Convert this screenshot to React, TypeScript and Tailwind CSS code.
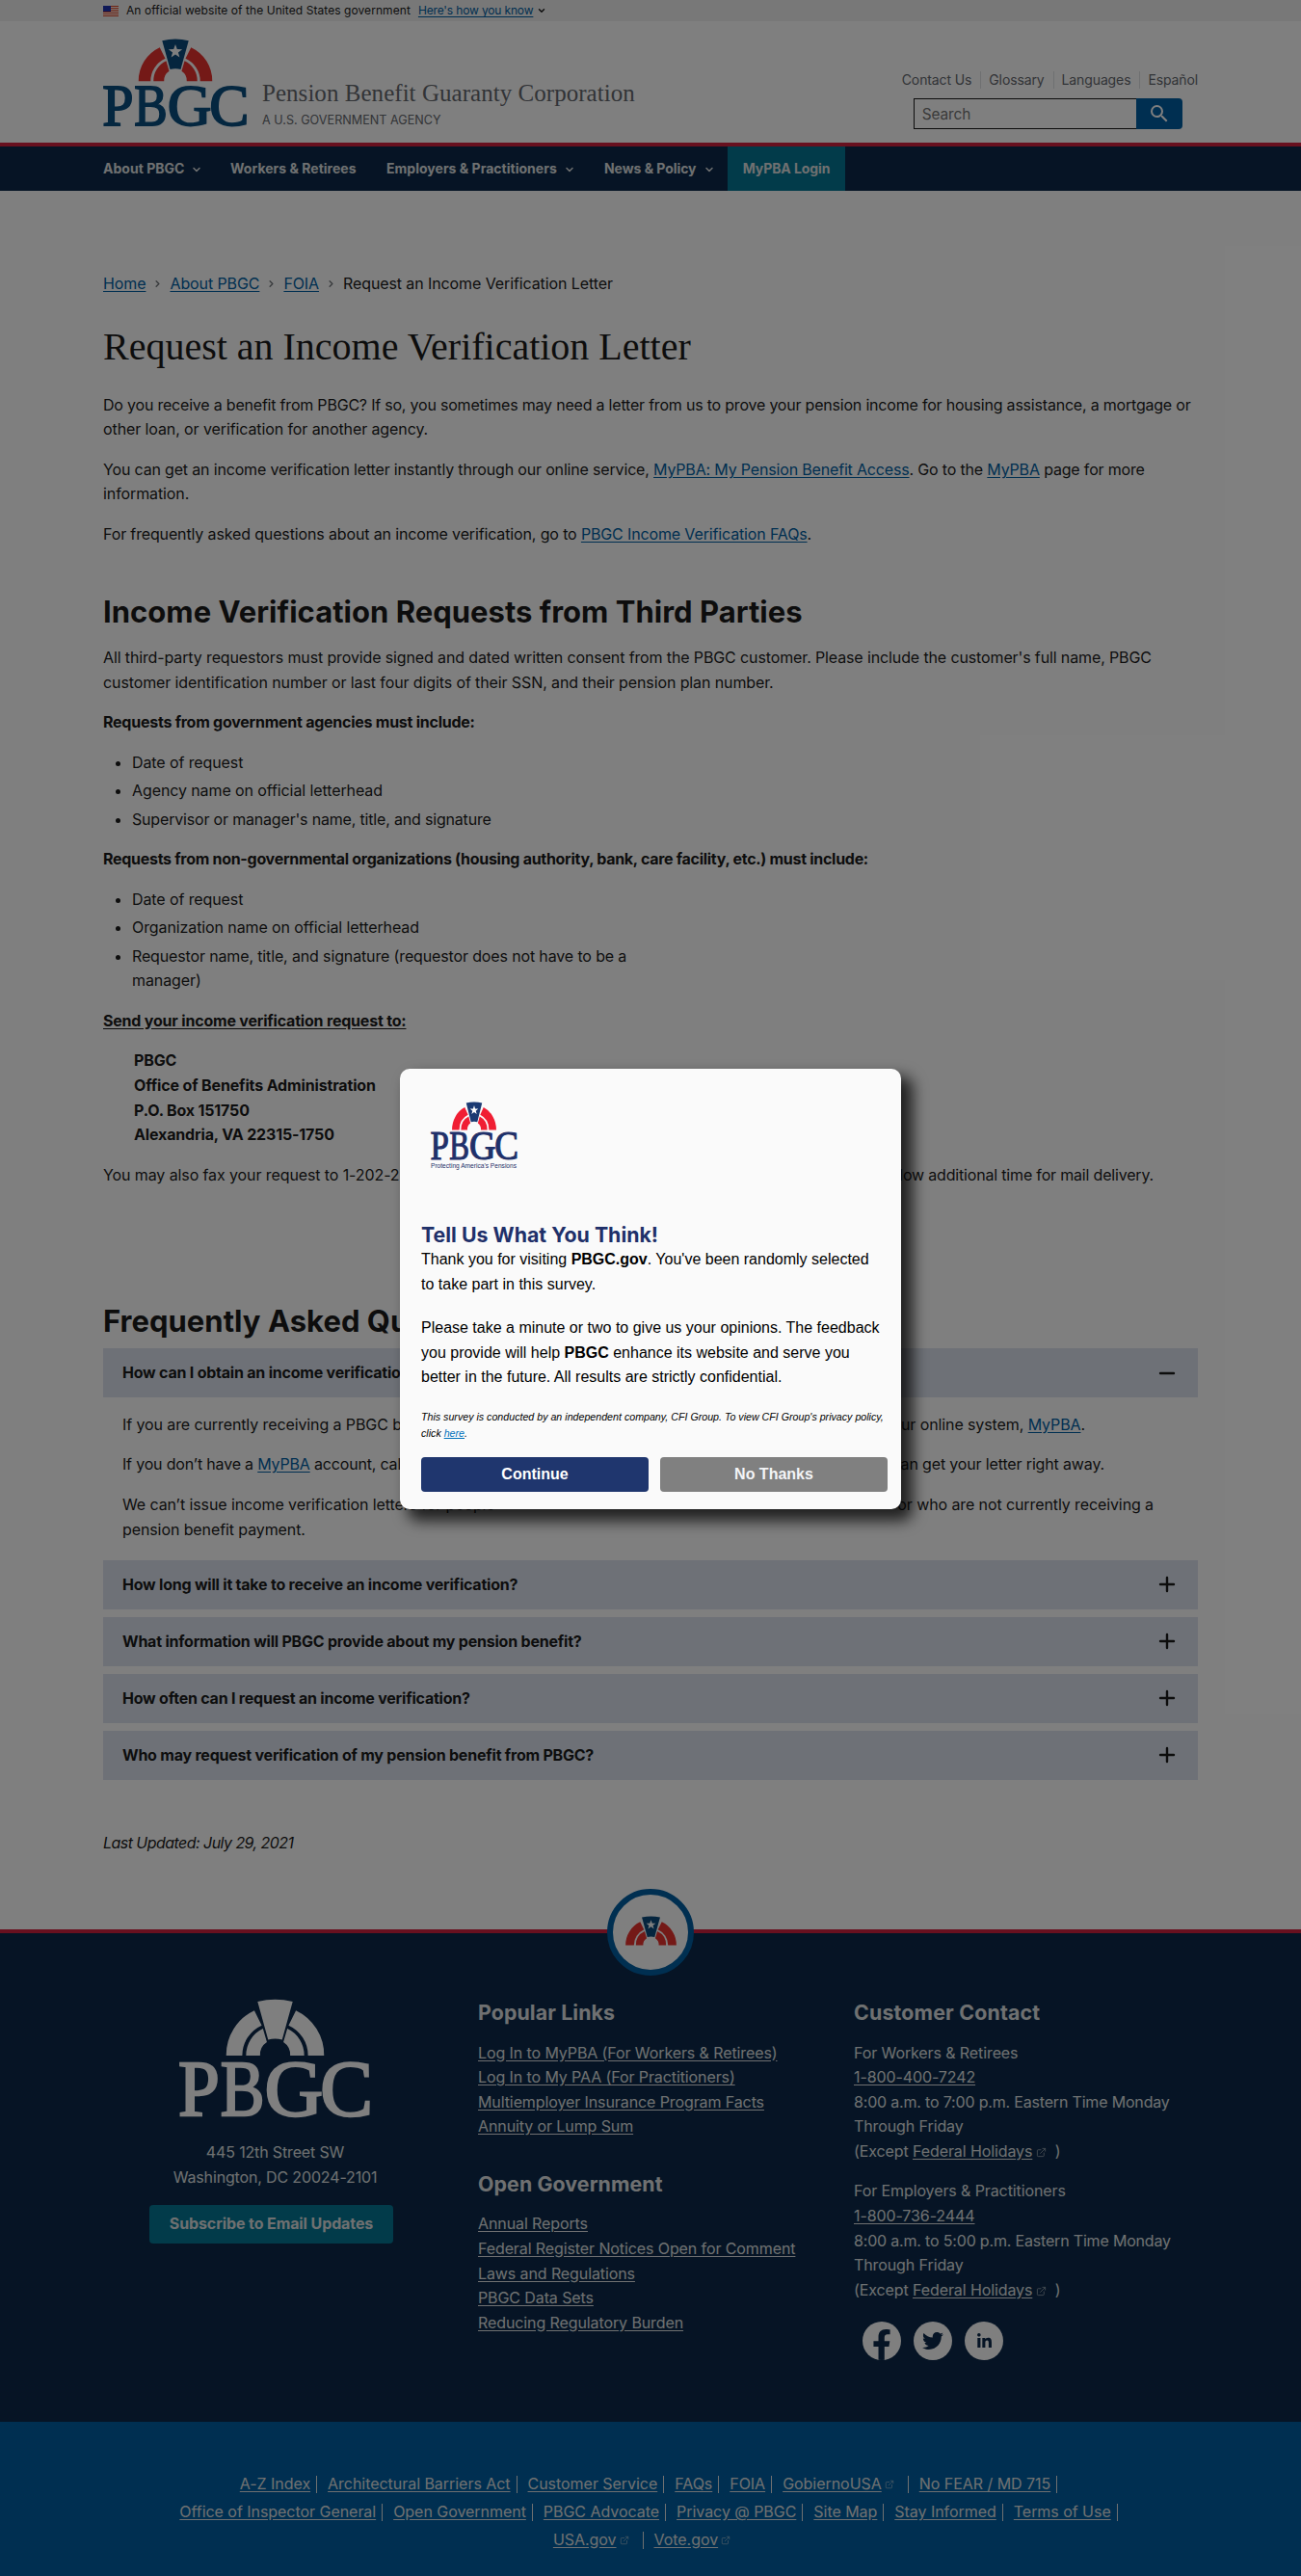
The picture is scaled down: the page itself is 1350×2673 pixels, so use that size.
import React from 'react'
import { ChevronDown, ChevronRight, ExternalLink, Minus, Plus } from 'lucide-react'
import { MdSearch } from 'react-icons/md'
import { FaFacebookF, FaTwitter, FaLinkedinIn } from 'react-icons/fa'

const link = 'text-[#005ea2] underline underline-offset-2'

function Arch({ ring, stone, star }: { ring: string; stone: string; star?: boolean }) {
  return (
    <g>
      <g fill={ring}>
        <path d="M-51 0A51 51 0 0 1-21.7-46.8L-14-31.3A34.3 34.3 0 0 0-34.3 0Z" />
        <path d="M51 0A51 51 0 0 0 21.7-46.8L14-31.3A34.3 34.3 0 0 1 34.3 0Z" />
        <path d="M-30.3 0A30.3 30.3 0 0 1-12.7-28L-8.6-14A15.7 15.7 0 0 0-15.7 0Z" />
        <path d="M30.3 0A30.3 30.3 0 0 0 12.7-28L8.6-14A15.7 15.7 0 0 1 15.7 0Z" />
      </g>
      <path fill={stone} d="M-18.3-56Q0-60.5 18.3-56L7.3-16.5Q0-18.5-7.3-16.5Z" />
      {star && (
        <path
          fill="#fff"
          d="M0-51L2.4-44.2 9.5-44 3.9-39.7 5.9-32.9 0-37 -5.9-32.9 -3.9-39.7 -9.5-44 -2.4-44.2Z"
        />
      )}
    </g>
  )
}

const letters = [
  { c: 'P', x: -101, w: 43 },
  { c: 'B', x: -57, w: 46 },
  { c: 'G', x: -11, w: 61 },
  { c: 'C', x: 47, w: 55 },
]

function Logo({
  className,
  ring,
  stone,
  text,
  star,
}: {
  className: string
  ring: string
  stone: string
  text: string
  star?: boolean
}) {
  return (
    <svg viewBox="-100 -59 200 124" preserveAspectRatio="none" className={`overflow-visible ${className}`}>
      <Arch ring={ring} stone={stone} star={star} />
      {letters.map((l) => (
        <text
          key={l.c}
          x={l.x}
          y={61.5}
          textLength={l.w}
          lengthAdjust="spacingAndGlyphs"
          letterSpacing={0}
          fontSize={83}
          fontFamily="Liberation Serif, serif"
          fill={text}
          stroke={text}
          strokeWidth={2.4}
        >
          {l.c}
        </text>
      ))}
    </svg>
  )
}

function Flag() {
  return (
    <svg viewBox="0 0 16 11" className="h-[11px] w-4">
      <rect width="16" height="11" fill="#fff" />
      {[0, 2, 4, 6, 8, 10].map((y) => (
        <rect key={y} y={y} width="16" height="1" fill="#db3e1f" />
      ))}
      <rect width="8" height="6" fill="#1e33b1" />
    </svg>
  )
}

function Ext() {
  return <ExternalLink className="ml-1 inline size-[11px] opacity-60" strokeWidth={2} />
}

function NavItem({ label, menu, className }: { label: string; menu?: boolean; className: string }) {
  return (
    <div className={`flex items-center whitespace-nowrap ${className}`}>
      {label}
      {menu && <ChevronDown className="ml-[7px] mt-0.5 size-3" strokeWidth={3} />}
    </div>
  )
}

function Bar({ label, open }: { label: string; open?: boolean }) {
  return (
    <div className="flex h-[50.5px] items-center justify-between bg-[#dce3ef] pl-5 pr-5 font-bold tracking-[-0.22px]">
      <span>{label}</span>
      {open ? <Minus className="size-6" strokeWidth={2.4} /> : <Plus className="size-6" strokeWidth={2.4} />}
    </div>
  )
}

function FooterLinks({ items }: { items: string[] }) {
  return (
    <ul>
      {items.map((t) => (
        <li key={t} className="whitespace-nowrap">
          <a className="underline underline-offset-2">{t}</a>
        </li>
      ))}
    </ul>
  )
}

function Contact({ title, phone, hours }: { title: string; phone: string; hours: string }) {
  return (
    <p className="mb-4">
      {title}
      <br />
      <a className="underline underline-offset-2">{phone}</a>
      <br />
      <span className="tracking-[-0.18px]">{hours}</span>
      <br />
      Through Friday
      <br />
      (Except <a className="underline underline-offset-2">Federal Holidays</a>
      <Ext /> <span className="ml-1">)</span>
    </p>
  )
}

const legal: { t: string; ext?: boolean; last?: boolean }[][] = [
  [
    { t: 'A-Z Index' },
    { t: 'Architectural Barriers Act' },
    { t: 'Customer Service' },
    { t: 'FAQs' },
    { t: 'FOIA' },
    { t: 'GobiernoUSA', ext: true },
    { t: 'No FEAR / MD 715' },
  ],
  [
    { t: 'Office of Inspector General' },
    { t: 'Open Government' },
    { t: 'PBGC Advocate' },
    { t: 'Privacy @ PBGC' },
    { t: 'Site Map' },
    { t: 'Stay Informed' },
    { t: 'Terms of Use' },
  ],
  [
    { t: 'USA.gov', ext: true },
    { t: 'Vote.gov', ext: true, last: true },
  ],
]

function Survey() {
  return (
    <div className="absolute left-[415px] top-[1109px] flex h-[457px] w-[520px] flex-col rounded-[10px] bg-[#fafafa] pl-[22px] pr-[14px] pt-[34px] font-['Liberation_Sans',sans-serif] tracking-normal text-black shadow-[10px_10px_15px_2px_rgba(0,0,0,0.75)]">
      <div className="ml-[10px] h-[125px] w-[90px]">
        <Logo className="h-[62px] w-[90px]" ring="#f01e33" stone="#1b3a73" text="#1f3069" star />
        <svg viewBox="0 0 90 9" className="h-[9px] w-[90px] overflow-visible">
          <text x="0" y="6.5" fontSize="7" textLength="89" lengthAdjust="spacingAndGlyphs" fill="#1f3069">
            Protecting America&#39;s Pensions
          </text>
        </svg>
      </div>
      <h2 className="whitespace-nowrap font-['Inter',sans-serif] text-[21.3px] font-bold leading-[26px] tracking-[0.02px] text-[#1f3069]">
        Tell Us What You Think!
      </h2>
      <p className="whitespace-nowrap text-base leading-[25.6px]">
        Thank you for visiting <b>PBGC.gov</b>. You&#39;ve been randomly selected
        <br />
        to take part in this survey.
      </p>
      <p className="mt-5 whitespace-nowrap text-base leading-[25.6px]">
        Please take a minute or two to give us your opinions. The feedback
        <br />
        you provide will help <b>PBGC</b> enhance its website and serve you
        <br />
        better in the future. All results are strictly confidential.
      </p>
      <p className="mt-5 whitespace-nowrap text-[10.67px] italic leading-[17px]">
        This survey is conducted by an independent company, CFI Group. To view CFI Group&#39;s privacy policy,
        <br />
        click <a className="text-[#0071bc] underline">here</a>.
      </p>
      <div className="mt-4 flex gap-3 text-base font-bold text-white">
        <div className="flex h-9 w-[236px] items-center justify-center rounded bg-[#1f366e]">Continue</div>
        <div className="flex h-9 w-[236px] items-center justify-center rounded bg-[#808080] text-gray-100">No Thanks</div>
      </div>
    </div>
  )
}

export default function App() {
  return (
    <div className="relative h-[2673px] w-[1350px] overflow-hidden bg-white font-['Inter',sans-serif] text-base leading-[25.6px] tracking-[-0.1px] text-[#1b1b1b]">
      <div className="flex h-[22px] items-center bg-[#f0f0f0] pl-[107px] text-xs">
        <Flag />
        <span className="ml-2 tracking-[0.07px]">An official website of the United States government</span>
        <a className={`ml-2 tracking-[-0.15px] ${link}`}>Here&#39;s how you know</a>
        <ChevronDown className="ml-1 size-2.5" strokeWidth={3.5} />
      </div>

      <header className="flex h-[126px] justify-between pl-[107px] pr-[107px]">
        <div className="flex">
          <Logo className="mt-[18px] h-[93px] w-[150px]" ring="#e8322f" stone="#0a4a7c" text="#0a4f80" star />
          <div className="ml-[15px] whitespace-nowrap pt-[60px]">
            <div className="font-['Liberation_Serif',serif] text-[25px] leading-[29px] tracking-[0.04px] text-[#65686e]">
              Pension Benefit Guaranty Corporation
            </div>
            <div className="mt-1.5 text-[12.6px] leading-4 tracking-[0.02px] text-[#65686e]">A U.S. GOVERNMENT AGENCY</div>
          </div>
        </div>
        <div className="pt-[50px]">
          <div className="flex h-[22px] items-center whitespace-nowrap text-sm tracking-[-0.12px] text-[#65686e]">
            {['Contact Us', 'Glossary', 'Languages', 'Español'].map((t, i) => (
              <span key={t} className={i ? 'ml-[9px] border-l border-[#dfe1e2] pl-[8px] leading-[18px]' : ''}>
                {t}
              </span>
            ))}
          </div>
          <div className="ml-[12px] mt-2 flex h-8 w-[279px]">
            <div className="flex flex-1 items-center border border-r-0 border-[#1b1b1b] pl-2 pt-0.5 text-[15.4px] text-[#757575]">Search</div>
            <div className="flex w-12 items-center justify-center rounded-r bg-[#005ea2] text-white">
              <MdSearch className="size-6" />
            </div>
          </div>
        </div>
      </header>

      <nav className="flex h-[50px] border-t-4 border-[#d0203f] bg-[#0c294a] pl-[107px] text-sm font-bold tracking-[0.02px] text-[#dfe1e2]">
        <NavItem className="w-[132px]" label="About PBGC" menu />
        <NavItem className="w-[162px]" label="Workers & Retirees" />
        <NavItem className="w-[226px]" label="Employers & Practitioners" menu />
        <NavItem className="w-[128px] tracking-[-0.05px]" label="News & Policy" menu />
        <NavItem className="w-[122px] justify-center bg-[#047694] tracking-[-0.1px]" label="MyPBA Login" />
      </nav>

      <main className="h-[1804px] px-[107px] pt-[84px]">
        <div className="flex items-center whitespace-nowrap">
          {['Home', 'About PBGC', 'FOIA'].map((t) => (
            <React.Fragment key={t}>
              <a className={link}>{t}</a>
              <ChevronRight className="mx-[7px] size-[11px] text-[#71767a]" strokeWidth={3} />
            </React.Fragment>
          ))}
          <span>Request an Income Verification Letter</span>
        </div>
        <h1 className="mt-[27px] whitespace-nowrap font-['Liberation_Serif',serif] text-[40px] leading-[50px] tracking-[-0.01px]">
          Request an Income Verification Letter
        </h1>
        <div className="mt-[23px] flex flex-col gap-4 whitespace-nowrap">
          <p>
            <span className="tracking-[-0.205px]">
              Do you receive a benefit from PBGC? If so, you sometimes may need a letter from us to prove your pension income for housing assistance, a mortgage or
            </span>
            <br />
            other loan, or verification for another agency.
          </p>
          <p>
            <span className="tracking-[-0.17px]">
              You can get an income verification letter instantly through our online service,{' '}
              <a className={link}>MyPBA: My Pension Benefit Access</a>. Go to the <a className={link}>MyPBA</a> page for more
            </span>
            <br />
            information.
          </p>
          <p className="tracking-[-0.14px]">
            For frequently asked questions about an income verification, go to <a className={link}>PBGC Income Verification FAQs</a>.
          </p>
        </div>

        <h2 className="mt-[48px] whitespace-nowrap text-[31px] font-bold leading-[38px] tracking-[0.02px]">
          Income Verification Requests from Third Parties
        </h2>
        <div className="mt-[16.5px] flex flex-col gap-4 whitespace-nowrap">
          <p>
            <span className="tracking-[-0.125px]">
              All third-party requestors must provide signed and dated written consent from the PBGC customer. Please include the customer&#39;s full name, PBGC
            </span>
            <br />
            <span className="tracking-[-0.11px]">
              customer identification number or last four digits of their SSN, and their pension plan number.
            </span>
          </p>
          <p className="font-bold tracking-[-0.25px]">Requests from government agencies must include:</p>
          <ul className="flex list-disc flex-col gap-[3.8px] pl-[30px]">
            <li>Date of request</li>
            <li>Agency name on official letterhead</li>
            <li className="tracking-[-0.18px]">Supervisor or manager&#39;s name, title, and signature</li>
          </ul>
          <p className="font-bold tracking-[-0.29px]">
            Requests from non-governmental organizations (housing authority, bank, care facility, etc.) must include:
          </p>
          <ul className="flex list-disc flex-col gap-[3.8px] pl-[30px]">
            <li>Date of request</li>
            <li>Organization name on official letterhead</li>
            <li>
              <span className="tracking-[-0.14px]">Requestor name, title, and signature (requestor does not have to be a</span>
              <br />
              manager)
            </li>
          </ul>
          <p className="font-bold tracking-[-0.2px] underline underline-offset-2">Send your income verification request to:</p>
          <p className="pl-8 font-bold tracking-[-0.15px]">
            PBGC
            <br />
            Office of Benefits Administration
            <br />
            P.O. Box 151750
            <br />
            Alexandria, VA 22315-1750
          </p>
          <p className="flex w-[1090px] justify-between">
            <span>You may also fax your request to 1-202-229-4047.</span>
            <span className="tracking-[-0.18px]">Please allow additional time for mail delivery.</span>
          </p>
        </div>

        <h2 className="mt-[120px] whitespace-nowrap text-[31px] font-bold leading-[38px] tracking-[0.02px]">
          Frequently Asked Questions
        </h2>
        <div className="mt-[9px]">
          <Bar open label="How can I obtain an income verification letter?" />
          <div className="flex flex-col gap-4 whitespace-nowrap px-5 pb-[19px] pt-4">
            <p className="flex w-[999px] justify-between">
              <span>If you are currently receiving a PBGC benefit, you can get</span>
              <span>
                a letter through our online system, <a className={link}>MyPBA</a>.
              </span>
            </p>
            <p className="flex w-[1019px] justify-between">
              <span className="tracking-[-0.18px]">
                If you don’t have a <a className={link}>MyPBA</a> account, call us at 1-800-400-7242
              </span>
              <span className="tracking-[-0.15px]">and you can get your letter right away.</span>
            </p>
            <p className="flex w-[1070px] flex-wrap justify-between">
              <span>We can’t issue income verification letters for people</span>
              <span>or who are not currently receiving a</span>
              <span className="w-full">pension benefit payment.</span>
            </p>
          </div>
          <div className="flex flex-col gap-[8.5px]">
            <Bar label="How long will it take to receive an income verification?" />
            <Bar label="What information will PBGC provide about my pension benefit?" />
            <Bar label="How often can I request an income verification?" />
            <Bar label="Who may request verification of my pension benefit from PBGC?" />
          </div>
        </div>
        <p className="mt-[53px] italic tracking-[-0.54px]">Last Updated: July 29, 2021</p>
      </main>

      <footer className="relative h-[511px] border-t-4 border-[#d0203f] bg-[#0c294a] text-[#dfe1e2]">
        <div className="absolute left-[630px] top-[-46px] flex size-[90px] items-center justify-center rounded-full border-[6px] border-[#005ea2] bg-white">
          <svg viewBox="-52 -59 104 60" className="mb-1 h-[31px] w-[55px]">
            <Arch ring="#e8322f" stone="#0a4a7c" star />
          </svg>
        </div>
        <div className="flex pl-[107px] pt-[68px]">
          <div className="flex w-[389px] flex-col">
            <Logo className="ml-[79px] h-[124px] w-[199px]" ring="#fff" stone="#fff" text="#fff" />
            <p className="mt-[23px] w-[357px] text-center tracking-[-0.15px]">
              445 12th Street SW
              <br />
              Washington, DC 20024-2101
            </p>
            <div className="ml-12 mt-4 flex h-10 w-[253px] items-center justify-center rounded bg-[#047694] font-bold">
              Subscribe to Email Updates
            </div>
          </div>
          <div className="w-[390px]">
            <h3 className="mb-[15.5px] text-[21.3px] font-bold leading-7 tracking-[0.12px]">Popular Links</h3>
            <FooterLinks
              items={[
                'Log In to MyPBA (For Workers & Retirees)',
                'Log In to My PAA (For Practitioners)',
                'Multiemployer Insurance Program Facts',
                'Annuity or Lump Sum',
              ]}
            />
            <h3 className="mb-[15.5px] mt-8 text-[21.3px] font-bold leading-7 tracking-[0.12px]">Open Government</h3>
            <FooterLinks
              items={[
                'Annual Reports',
                'Federal Register Notices Open for Comment',
                'Laws and Regulations',
                'PBGC Data Sets',
                'Reducing Regulatory Burden',
              ]}
            />
          </div>
          <div className="w-[350px] whitespace-nowrap">
            <h3 className="mb-[15.5px] text-[21.3px] font-bold leading-7 tracking-[0.2px]">Customer Contact</h3>
            <Contact title="For Workers & Retirees" phone="1-800-400-7242" hours="8:00 a.m. to 7:00 p.m. Eastern Time Monday" />
            <Contact title="For Employers & Practitioners" phone="1-800-736-2444" hours="8:00 a.m. to 5:00 p.m. Eastern Time Monday" />
            <div className="ml-[9px] mt-5 flex gap-[13px] text-[#0c294a]">
              <div className="flex size-10 items-end justify-center overflow-hidden rounded-full bg-white">
                <FaFacebookF className="h-8 w-5" />
              </div>
              <div className="flex size-10 items-center justify-center rounded-full bg-white">
                <FaTwitter className="size-[22px]" />
              </div>
              <div className="flex size-10 items-center justify-center rounded-full bg-white">
                <FaLinkedinIn className="size-[17px]" />
              </div>
            </div>
          </div>
        </div>
      </footer>

      <div className="flex h-[160px] flex-col items-center bg-[#005ea2] pr-[15px] pt-[50px] tracking-[-0.04px] text-[#dfe1e2]">
        {legal.map((row, i) => (
          <div key={i} className="flex h-[29px] items-center whitespace-nowrap">
            {row.map((l) => (
              <div key={l.t} className={`flex h-[18px] items-center pl-[11px] pr-[6px] ${l.last ? '' : 'border-r border-[#dfe1e2]'}`}>
                <a className="underline underline-offset-2">{l.t}</a>
                {l.ext && <ExternalLink className="ml-[3px] mr-2 size-2.5 opacity-60" />}
              </div>
            ))}
          </div>
        ))}
      </div>

      <div className="absolute inset-0 bg-black/50" />
      <Survey />
    </div>
  )
}
